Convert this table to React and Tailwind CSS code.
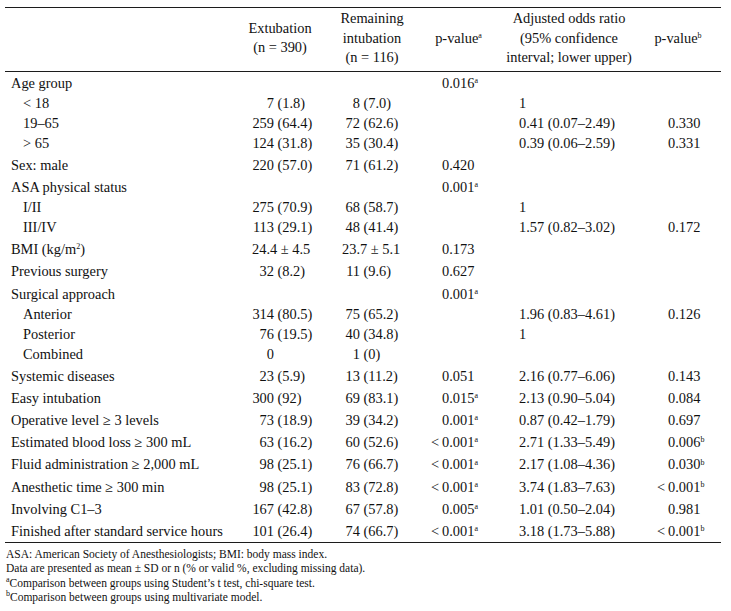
import React from 'react';

const COLS = 'grid grid-cols-[225px_100px_90px_85px_135px_81px]';

const rows = [
  { label: 'Age group', p: { v: '0.016', s: 'a' } },
  { label: '< 18', sub: true, c1: ['7', '(1.8)'], c2: ['8', '(7.0)'], or: '1' },
  { label: '19–65', sub: true, c1: ['259', '(64.4)'], c2: ['72', '(62.6)'], or: '0.41 (0.07–2.49)', p2: { v: '0.330' } },
  { label: '> 65', sub: true, c1: ['124', '(31.8)'], c2: ['35', '(30.4)'], or: '0.39 (0.06–2.59)', p2: { v: '0.331' } },
  { label: 'Sex: male', c1: ['220', '(57.0)'], c2: ['71', '(61.2)'], p: { v: '0.420' } },
  { label: 'ASA physical status', p: { v: '0.001', s: 'a' } },
  { label: 'I/II', sub: true, c1: ['275', '(70.9)'], c2: ['68', '(58.7)'], or: '1' },
  { label: 'III/IV', sub: true, c1: ['113', '(29.1)'], c2: ['48', '(41.4)'], or: '1.57 (0.82–3.02)', p2: { v: '0.172' } },
  { label: 'bmi', raw1: '24.4 ± 4.5', raw2: '23.7 ± 5.1', p: { v: '0.173' } },
  { label: 'Previous surgery', c1: ['32', '(8.2)'], c2: ['11', '(9.6)'], p: { v: '0.627' } },
  { label: 'Surgical approach', p: { v: '0.001', s: 'a' } },
  { label: 'Anterior', sub: true, c1: ['314', '(80.5)'], c2: ['75', '(65.2)'], or: '1.96 (0.83–4.61)', p2: { v: '0.126' } },
  { label: 'Posterior', sub: true, c1: ['76', '(19.5)'], c2: ['40', '(34.8)'], or: '1' },
  { label: 'Combined', sub: true, c1: ['0', ''], c2: ['1', '(0)'] },
  { label: 'Systemic diseases', c1: ['23', '(5.9)'], c2: ['13', '(11.2)'], p: { v: '0.051' }, or: '2.16 (0.77–6.06)', p2: { v: '0.143' } },
  { label: 'Easy intubation', c1: ['300', '(92)'], c2: ['69', '(83.1)'], p: { v: '0.015', s: 'a' }, or: '2.13 (0.90–5.04)', p2: { v: '0.084' } },
  { label: 'Operative level ≥ 3 levels', c1: ['73', '(18.9)'], c2: ['39', '(34.2)'], p: { v: '0.001', s: 'a' }, or: '0.87 (0.42–1.79)', p2: { v: '0.697' } },
  { label: 'Estimated blood loss ≥ 300 mL', c1: ['63', '(16.2)'], c2: ['60', '(52.6)'], p: { lt: true, v: '0.001', s: 'a' }, or: '2.71 (1.33–5.49)', p2: { v: '0.006', s: 'b' } },
  { label: 'Fluid administration ≥ 2,000 mL', c1: ['98', '(25.1)'], c2: ['76', '(66.7)'], p: { lt: true, v: '0.001', s: 'a' }, or: '2.17 (1.08–4.36)', p2: { v: '0.030', s: 'b' } },
  { label: 'Anesthetic time ≥ 300 min', c1: ['98', '(25.1)'], c2: ['83', '(72.8)'], p: { lt: true, v: '0.001', s: 'a' }, or: '3.74 (1.83–7.63)', p2: { lt: true, v: '0.001', s: 'b' } },
  { label: 'Involving C1–3', c1: ['167', '(42.8)'], c2: ['67', '(57.8)'], p: { v: '0.005', s: 'a' }, or: '1.01 (0.50–2.04)', p2: { v: '0.981' } },
  { label: 'Finished after standard service hours', c1: ['101', '(26.4)'], c2: ['74', '(66.7)'], p: { lt: true, v: '0.001', s: 'a' }, or: '3.18 (1.73–5.88)', p2: { lt: true, v: '0.001', s: 'b' } },
];

function Sup({ children }) {
  return <sup className="text-[8px] top-[-0.6em]">{children}</sup>;
}

// number right-aligned to a fixed edge, parenthesis follows
function Count({ pair, w }) {
  if (!pair) return null;
  return (
    <div className="flex whitespace-nowrap">
      <span className={`${w} text-right shrink-0`}>{pair[0]}</span>
      {pair[1] && <span className="pl-[3.5px]">{pair[1]}</span>}
    </div>
  );
}

function PVal({ p, w }) {
  if (!p) return null;
  return (
    <div className="flex whitespace-nowrap">
      <span className={`${w} text-right shrink-0 pr-[3px]`}>{p.lt ? '<' : ''}</span>
      <span>
        {p.v}
        {p.s && <Sup>{p.s}</Sup>}
      </span>
    </div>
  );
}

function Row({ r }) {
  return (
    <div className={`${COLS} items-center ${r.sub ? 'h-[20px] pb-[4px]' : 'h-[22.2px]'}`}>
      <div className={`whitespace-nowrap ${r.sub ? 'pl-[18px]' : 'pl-[6px]'}`}>
        {r.label === 'bmi' ? (
          <span>
            BMI (kg/m<Sup>2</Sup>)
          </span>
        ) : (
          r.label
        )}
      </div>
      <div>
        {r.raw1 ? <span className="pl-[22px] whitespace-nowrap">{r.raw1}</span> : <Count pair={r.c1} w="w-[44px]" />}
      </div>
      <div>
        {r.raw2 ? <span className="pl-[12px] whitespace-nowrap">{r.raw2}</span> : <Count pair={r.c2} w="w-[30px]" />}
      </div>
      <div>
        <PVal p={r.p} w="w-[22px]" />
      </div>
      <div className="pl-[14px] whitespace-nowrap">{r.or}</div>
      <div>
        <PVal p={r.p2} w="w-[28px]" />
      </div>
    </div>
  );
}

export default function App() {
  return (
    <div className="w-[731px] h-[611px] bg-white overflow-hidden text-[#111] font-['Liberation_Serif','Times_New_Roman',serif] text-[14.4px]">
      <div className="ml-[5px] mt-[7px] w-[716px] border-t border-[#1c1c1c]">
        {/* header */}
        <div className={`${COLS} items-center text-center leading-[19.5px] pt-[1px] pb-[3px] border-b border-[#1c1c1c]`}>
          <div />
          <div>
            Extubation
            <br />
            (n = 390)
          </div>
          <div className="pr-[6px]">
            Remaining
            <br />
            intubation
            <br />
            (n = 116)
          </div>
          <div className="pr-[8px]">
            p-value<Sup>a</Sup>
          </div>
          <div className="pr-[7px] whitespace-nowrap">
            Adjusted odds ratio
            <br />
            (95% confidence
            <br />
            interval; lower upper)
          </div>
          <div className="pr-[5px]">
            p-value<Sup>b</Sup>
          </div>
        </div>

        {/* body */}
        <div className="border-b border-[#1c1c1c] leading-[18px]">
          {rows.map((r, i) => (
            <Row key={i} r={r} />
          ))}
        </div>
      </div>

      {/* footnotes */}
      <div className="pl-[6px] pt-[4px] text-[11.5px] leading-[14.3px]">
        <p>ASA: American Society of Anesthesiologists; BMI: body mass index.</p>
        <p>Data are presented as mean ± SD or n (% or valid %, excluding missing data).</p>
        <p>
          <Sup>a</Sup>Comparison between groups using Student’s t test, chi-square test.
        </p>
        <p>
          <Sup>b</Sup>Comparison between groups using multivariate model.
        </p>
      </div>
    </div>
  );
}
